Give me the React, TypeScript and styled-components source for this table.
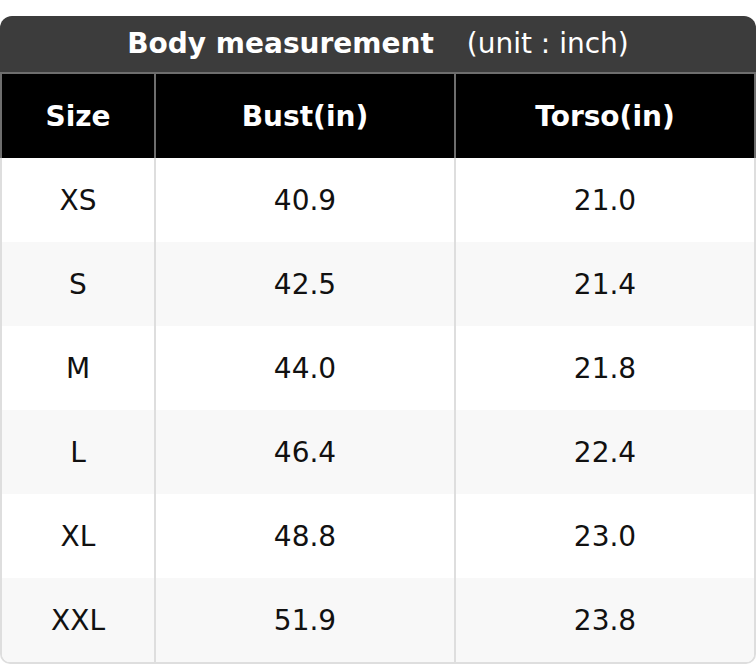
import styled, { createGlobalStyle } from 'styled-components';

const GlobalStyle = createGlobalStyle`
  html, body {
    margin: 0;
    padding: 0;
    background: #ffffff;
  }
  body {
    font-family: 'DejaVu Sans', 'Liberation Sans', sans-serif;
  }
`;

const Page = styled.div`
  width: 756px;
  padding-top: 16px;
`;

const Table = styled.div`
  width: 756px;
  display: flex;
  flex-direction: column;
`;

const TitleBar = styled.div`
  height: 56px;
  background: #3c3c3c;
  border-radius: 12px 12px 0 0;
  display: flex;
  justify-content: center;
  align-items: center;
  color: #ffffff;
  font-size: 28px;
  line-height: 1;
  white-space: nowrap;
`;

const TitleMain = styled.span`
  font-weight: bold;
`;

const TitleUnit = styled.span`
  margin-left: 33px;
  font-weight: normal;
`;

const Head = styled.div`
  display: grid;
  grid-template-columns: 154px 300px 1fr;
  background: #000000;
  border: 2px solid #6e6e6e;
  border-bottom: none;
`;

const HeadCell = styled.div<{ $last?: boolean }>`
  height: 84px;
  display: flex;
  justify-content: center;
  align-items: center;
  color: #ffffff;
  font-weight: bold;
  font-size: 28px;
  border-right: ${(p) => (p.$last ? 'none' : '2px solid #6e6e6e')};
`;

const Body = styled.div`
  border: 2px solid #dedede;
  border-top: none;
  border-radius: 0 0 10px 10px;
  overflow: hidden;
`;

const Row = styled.div<{ $striped: boolean }>`
  display: grid;
  grid-template-columns: 154px 300px 1fr;
  background: ${(p) => (p.$striped ? '#f8f8f8' : '#ffffff')};
`;

const Cell = styled.div<{ $last?: boolean }>`
  height: 84px;
  display: flex;
  justify-content: center;
  align-items: center;
  color: #111111;
  font-size: 28px;
  border-right: ${(p) => (p.$last ? 'none' : '2px solid #dedede')};
`;

const rows = [
  { size: 'XS', bust: '40.9', torso: '21.0' },
  { size: 'S', bust: '42.5', torso: '21.4' },
  { size: 'M', bust: '44.0', torso: '21.8' },
  { size: 'L', bust: '46.4', torso: '22.4' },
  { size: 'XL', bust: '48.8', torso: '23.0' },
  { size: 'XXL', bust: '51.9', torso: '23.8' },
];

function App() {
  return (
    <>
      <GlobalStyle />
      <Page>
        <Table>
          <TitleBar>
            <TitleMain>Body measurement</TitleMain>
            <TitleUnit>(unit : inch)</TitleUnit>
          </TitleBar>
          <Head>
            <HeadCell>Size</HeadCell>
            <HeadCell>Bust(in)</HeadCell>
            <HeadCell $last>Torso(in)</HeadCell>
          </Head>
          <Body>
            {rows.map((r, i) => (
              <Row key={r.size} $striped={i % 2 === 1}>
                <Cell>{r.size}</Cell>
                <Cell>{r.bust}</Cell>
                <Cell $last>{r.torso}</Cell>
              </Row>
            ))}
          </Body>
        </Table>
      </Page>
    </>
  );
}

export default App;
